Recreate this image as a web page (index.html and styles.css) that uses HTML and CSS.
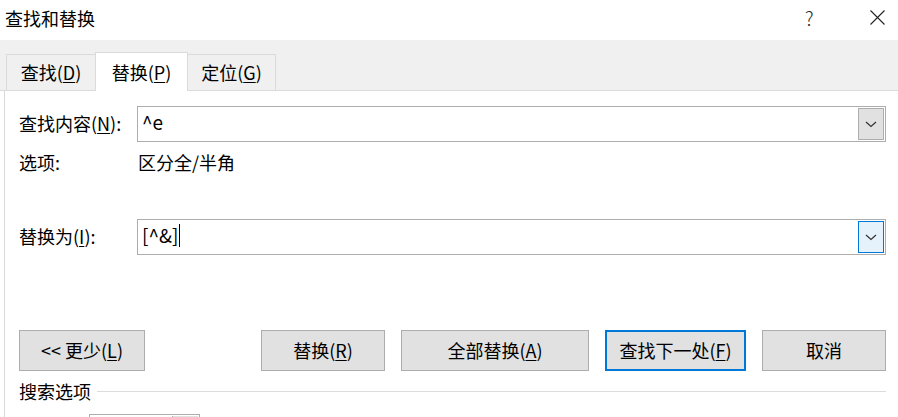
FILE: index.html
```html
<!DOCTYPE html>
<html lang="zh-CN">
<head>
    <meta charset="UTF-8">
    <title>查找和替换</title>
    <link rel="stylesheet" href="styles.css">
</head>
<body>
    <div class="dialog">
        <header class="titlebar">
            <span class="title">查找和替换</span>
            <span class="help">?</span>
            <button class="close" aria-label="关闭">
                <svg viewBox="0 0 15 15" width="15" height="15"><path d="M0.5 0.5L14.5 14.5M14.5 0.5L0.5 14.5" stroke="#222" stroke-width="1.1" fill="none"/></svg>
            </button>
        </header>

        <nav class="tabs">
            <div class="tab tab-find">查找(<u>D</u>)</div>
            <div class="tab tab-replace active">替换(<u>P</u>)</div>
            <div class="tab tab-goto">定位(<u>G</u>)</div>
        </nav>

        <main class="panel">
            <div class="field-row row-find">
                <label class="field-label">查找内容(<u>N</u>):</label>
                <div class="combo">
                    <span class="combo-text">^e</span>
                    <span class="combo-btn">
                        <svg viewBox="0 0 12 7" width="12" height="7"><path d="M1 1L6 5.5L11 1" stroke="#333" stroke-width="1.2" fill="none"/></svg>
                    </span>
                </div>
            </div>

            <div class="field-row row-options">
                <span class="field-label">选项:</span>
                <span class="options-value">区分全/半角</span>
            </div>

            <div class="field-row row-replace">
                <label class="field-label">替换为(<u>I</u>):</label>
                <div class="combo">
                    <span class="combo-text">[^&amp;]<span class="caret"></span></span>
                    <span class="combo-btn focused">
                        <svg viewBox="0 0 12 7" width="12" height="7"><path d="M1 1L6 5.5L11 1" stroke="#333" stroke-width="1.2" fill="none"/></svg>
                    </span>
                </div>
            </div>

            <div class="button-row">
                <button class="btn btn-less">&lt;&lt; 更少(<u>L</u>)</button>
                <div class="button-group">
                    <button class="btn btn-replace">替换(<u>R</u>)</button>
                    <button class="btn btn-replace-all">全部替换(<u>A</u>)</button>
                    <button class="btn btn-next default">查找下一处(<u>F</u>)</button>
                    <button class="btn btn-cancel">取消</button>
                </div>
            </div>

            <div class="group-title">
                <span>搜索选项</span>
                <span class="group-line"></span>
            </div>

            <div class="search-row">
                <div class="mini-combo"><span class="mini-btn"></span></div>
            </div>
        </main>
    </div>
</body>
</html>
```

FILE: styles.css
```css
*{margin:0;padding:0;box-sizing:border-box}
html,body{width:898px;height:417px;overflow:hidden}
body{font-family:"Noto Sans CJK SC","Noto Sans CJK JP",sans-serif;font-size:18px;line-height:24px;color:#000;background:#fff}
u{text-decoration:underline;text-underline-offset:2px;text-decoration-thickness:1px}
button{font:inherit;color:inherit}

.dialog{width:898px;height:417px;display:flex;flex-direction:column;overflow:hidden}

.titlebar{flex-shrink:0;height:40px;display:flex;align-items:center;padding:0 0 5px 5px}
.title{flex:1}
.help{width:20px;margin-right:45px;font-size:19px;line-height:26px;color:#222;font-weight:300}
.close{border:none;background:none;width:15px;height:15px;margin-right:13px;display:flex}

.tabs{flex-shrink:0;height:51px;background:#f0f0f0;display:flex;align-items:flex-end;padding-left:6px;border-bottom:1px solid #dadada}
.tab{height:36px;border:1px solid #dadada;border-bottom:none;display:flex;align-items:center;justify-content:center;background:#f0f0f0;padding-bottom:1px}
.tab-find{width:90px}
.tab-replace{width:93px;margin-left:-1px}
.tab-goto{width:89px;margin-left:-1px}
.tab.active{height:39px;margin-bottom:-1px;background:#fff;position:relative;padding-bottom:0}

.panel{flex:1;min-height:0;margin-left:4px;border-left:1px solid #dadada;padding:15px 12px 0 14px;display:flex;flex-direction:column}
.panel > *{flex-shrink:0}

.field-row{display:grid;grid-template-columns:118px 1fr;align-items:center}
.field-label{padding-bottom:2px}
.combo{height:36px;border:1px solid #adadad;display:flex;align-items:center;padding:1px}
.combo-text{flex:1;padding-left:3px;padding-bottom:4px;display:flex;align-items:center;font-size:19px}
.caret{display:inline-block;width:1px;height:23px;background:#000;margin-left:1px}
.combo-btn{width:26px;height:32px;background:#e1e1e1;border:1px solid #adadad;display:flex;align-items:center;justify-content:center;padding-top:1px}
.combo-btn.focused{background:#e5f1fb;border-color:#0078d7}

.row-options{margin-top:8px}
.options-value{padding-left:1px;padding-bottom:2px}
.row-replace{margin-top:43px}

.button-row{margin-top:75px;display:flex;justify-content:space-between}
.button-group{display:flex;gap:16px}
.btn{height:41px;background:#e1e1e1;border:1px solid #adadad;display:flex;align-items:center;justify-content:center;padding-bottom:2px}
.btn-less{width:126px}
.btn-replace{width:124px}
.btn-replace-all{width:188px}
.btn-next{width:141px}
.btn-cancel{width:124px}
.btn.default{border:2px solid #0078d7}

.group-title{margin-top:8px;display:flex;align-items:center;gap:6px;height:24px}
.group-line{flex:1;height:1px;background:#dcdcdc;margin-top:1px}

.search-row{margin-top:11px;padding-left:70px}
.mini-combo{width:111px;height:30px;border:1px solid #adadad;display:flex;justify-content:flex-end;padding:1px}
.mini-btn{width:26px;background:#e1e1e1;border-left:1px solid #adadad}
```
